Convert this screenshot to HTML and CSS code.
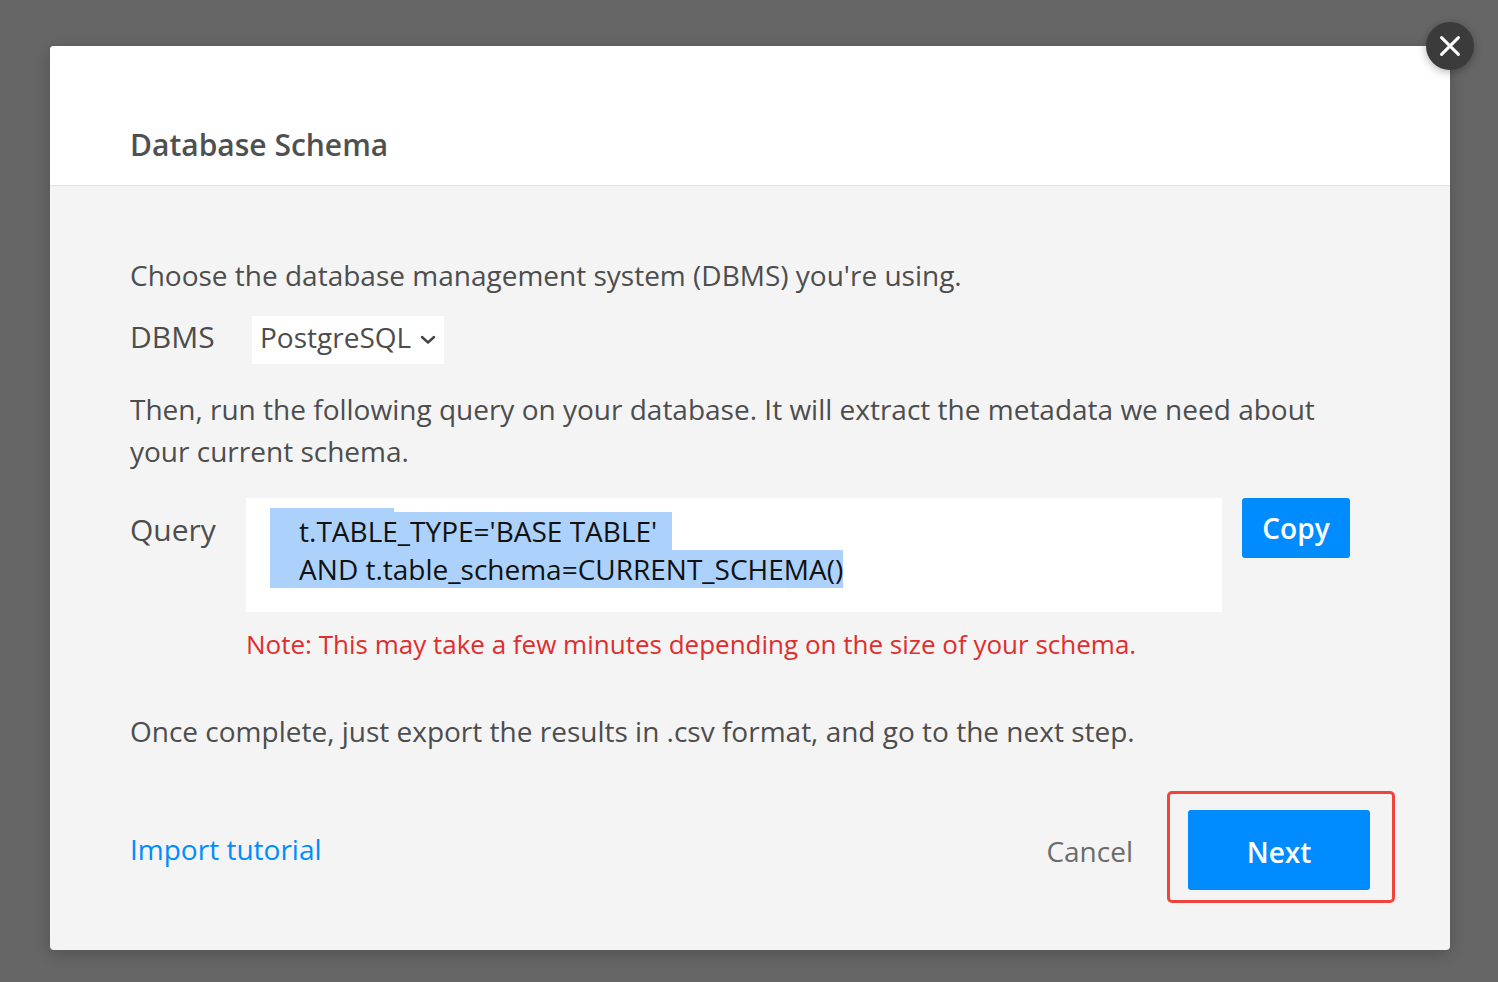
FILE: index.html
```html
<!DOCTYPE html>
<html lang="en">
<head>
<meta charset="utf-8">
<title>Database Schema</title>
<link rel="stylesheet" href="styles.css">
</head>
<body>
<div class="modal">
  <button class="close" aria-label="Close">
    <svg width="20" height="20" viewBox="0 0 20 20"><path d="M1.6 1.6 L18.4 18.4 M18.4 1.6 L1.6 18.4" stroke="#fff" stroke-width="3" stroke-linecap="round" fill="none"/></svg>
  </button>
  <header class="modal-head"><h1 class="title">Database Schema</h1></header>
  <main class="modal-body">
    <p class="text first">Choose the database management system (DBMS) you're using.</p>
    <div class="dbms-row">
      <span class="label dbms-label">DBMS</span>
      <div class="select">PostgreSQL
        <svg class="chev" width="16" height="10" viewBox="0 0 16 10"><path d="M2 2 L8 7.5 L14 2" stroke="#444" stroke-width="2.4" stroke-linecap="round" stroke-linejoin="round" fill="none"/></svg>
      </div>
    </div>
    <p class="text para">Then, run the following query on your database. It will extract the metadata we need about your current schema.</p>
    <div class="query-row">
      <span class="label query-label">Query</span>
      <div class="query-col">
        <div class="query-line">
          <div class="code">
            <div class="sel prev"></div>
            <div class="sel-line"><span class="sel">&nbsp;&nbsp;&nbsp;&nbsp;t.TABLE_TYPE='BASE TABLE'&nbsp;&nbsp;</span></div>
            <div class="sel-line"><span class="sel">&nbsp;&nbsp;&nbsp;&nbsp;AND t.table_schema=CURRENT_SCHEMA()</span></div>
          </div>
          <button class="copy">Copy</button>
        </div>
        <p class="note">Note: This may take a few minutes depending on the size of your schema.</p>
      </div>
    </div>
    <p class="text once">Once complete, just export the results in .csv format, and go to the next step.</p>
    <div class="actions">
      <a class="tutorial" href="#">Import tutorial</a>
      <div class="right">
        <span class="cancel">Cancel</span>
        <div class="highlight"><button class="next">Next</button></div>
      </div>
    </div>
  </main>
</div>
</body>
</html>
```
FILE: styles.css
```css
* { box-sizing: border-box; }
html, body { margin: 0; height: 100%; }
body {
  background: #666;
  font-family: "Open Sans", sans-serif;
  color: #4d4d4d;
  padding: 46px 48px 32px 50px;
  overflow: hidden;
}
.modal {
  position: relative;
  height: 904px;
  border-radius: 4px;
  background: #f4f4f4;
  box-shadow: 0 4px 16px rgba(0,0,0,.2);
}
.close {
  position: absolute;
  top: -24px;
  right: -24px;
  width: 48px;
  height: 48px;
  border: 0;
  border-radius: 50%;
  background: #3b3b3b;
  box-shadow: 0 2px 8px rgba(0,0,0,.3);
  display: flex;
  align-items: center;
  justify-content: center;
  padding: 0;
}
.modal-head {
  height: 140px;
  background: #fff;
  border-bottom: 1px solid #e4e4e4;
  border-radius: 4px 4px 0 0;
  padding: 79px 80px 0;
}
.title {
  margin: 0;
  font-size: 30px;
  line-height: 40px;
  font-weight: 600;
  color: #505050;
}
.modal-body { padding: 68px 80px 0; }
.text { margin: 0; font-size: 28px; line-height: 42px; }
.dbms-row { display: flex; align-items: flex-start; margin-top: 20px; }
.label { font-size: 30px; line-height: 48px; }
.dbms-label { width: 122px; line-height: 42px; }
.select {
  height: 48px;
  width: 192px;
  background: #fff;
  font-size: 28px;
  padding: 0 0 6px 8px;
  display: flex;
  align-items: center;
  gap: 9px;
  white-space: nowrap;
}
.chev { margin-top: 6px; }
.para { margin-top: 24px; width: 1200px; }
.query-row { display: flex; margin-top: 26px; }
.query-label { width: 116px; flex: none; line-height: 64px; }
.query-col { flex: 1; }
.query-line { display: flex; gap: 20px; align-items: flex-start; }
.code {
  width: 976px;
  height: 114px;
  background: #fff;
  padding: 14px 24px 0;
  font-size: 28px;
  line-height: 38px;
  color: #111;
  overflow: hidden;
}
.sel { background: #acd2fb; }
.prev { display: block; width: 124px; height: 4px; margin-top: -4px; }
.sel-line { height: 38px; white-space: nowrap; }
.sel-line .sel { display: inline-block; height: 38px; }
.copy {
  width: 108px;
  height: 60px;
  border: 0;
  border-radius: 3px;
  background: #008cff;
  color: #fff;
  font: 600 28px "Open Sans", sans-serif;
  padding: 0;
}
.note {
  margin: 13px 0 0;
  font-size: 26px;
  line-height: 38px;
  color: #e02d2d;
}
.once { margin-top: 47px; }
.actions { display: flex; justify-content: space-between; align-items: center; margin-top: 39px; margin-right: -25px; }
.tutorial { font-size: 28px; line-height: 44px; padding-top: 4px; color: #008cff; text-decoration: none; }
.right { display: flex; align-items: center; gap: 34px; }
.cancel { font-size: 28px; padding-top: 8px; color: #6b6b6b; }
.highlight {
  width: 228px;
  height: 112px;
  border: 3px solid #f0443c;
  border-radius: 5px;
  padding: 16px 0 0 18px;
}
.next {
  display: block;
  width: 182px;
  height: 80px;
  border: 0;
  border-radius: 3px;
  background: #008cff;
  color: #fff;
  font: 600 28px "Open Sans", sans-serif;
  padding: 4px 0 0;
}
```
